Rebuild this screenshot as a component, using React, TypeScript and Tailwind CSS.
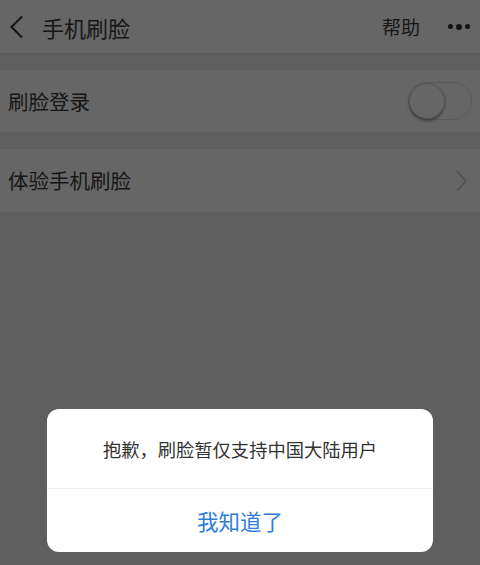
import React from "react";

const font = { fontFamily: '"Noto Sans CJK SC", "Noto Sans", sans-serif' };

export default function App() {
  return (
    <div className="relative w-[480px] h-[565px] overflow-hidden bg-[#5f5f5f]" style={font}>
      {/* Header */}
      <div className="h-[54px] bg-[#666666] border-b border-[#5a5a5a] flex items-center">
        <svg width="16" height="24" viewBox="0 0 16 24" className="ml-[9px]">
          <path d="M13 1.5 L2.5 12 L13 22.5" fill="none" stroke="#141414" strokeWidth="2" />
        </svg>
        <span className="ml-[17px] text-[22px] leading-none text-[#161616]">手机刷脸</span>
        <span className="ml-auto text-[19px] leading-none text-[#161616]">帮助</span>
        <div className="ml-[28px] mr-[10px] flex items-center gap-[3px]">
          <span className="block w-[5px] h-[5px] rounded-full bg-[#141414]" />
          <span className="block w-[6px] h-[6px] rounded-full bg-[#141414]" />
          <span className="block w-[5px] h-[5px] rounded-full bg-[#141414]" />
        </div>
      </div>

      {/* Row 1 */}
      <div className="mt-[16px] h-[62px] bg-[#666666] flex items-center pl-[8px] pr-[8px]">
        <span className="text-[20.5px] leading-none text-[#161616]">刷脸登录</span>
        <div className="ml-auto w-[64px] h-[38px] rounded-full border border-[#5a5a5a] relative">
          <div className="absolute left-0 top-0 w-[36px] h-[36px] rounded-full bg-[#666666] border border-[#555] shadow-[0_2px_3px_rgba(0,0,0,0.35)]" />
        </div>
      </div>

      {/* Row 2 */}
      <div className="mt-[17px] h-[63px] bg-[#666666] flex items-center pl-[8px] pr-[13px]">
        <span className="text-[20.5px] leading-none text-[#161616]">体验手机刷脸</span>
        <svg width="11" height="22" viewBox="0 0 11 22" className="ml-auto">
          <path d="M1 1 L10 11 L1 21" fill="none" stroke="#505050" strokeWidth="1.5" />
        </svg>
      </div>

      {/* Dialog */}
      <div className="absolute left-[47px] top-[409px] w-[386px] h-[143px] bg-white rounded-[12px] flex flex-col">
        <div className="h-[80px] flex items-center justify-center border-b border-[#ececec]">
          <span className="text-[18.3px] leading-none text-[#333333] mt-[2px]">抱歉，刷脸暂仅支持中国大陆用户</span>
        </div>
        <div className="flex-1 flex items-center justify-center">
          <span className="text-[21.5px] leading-none text-[#2e7ddf]">我知道了</span>
        </div>
      </div>
    </div>
  );
}
